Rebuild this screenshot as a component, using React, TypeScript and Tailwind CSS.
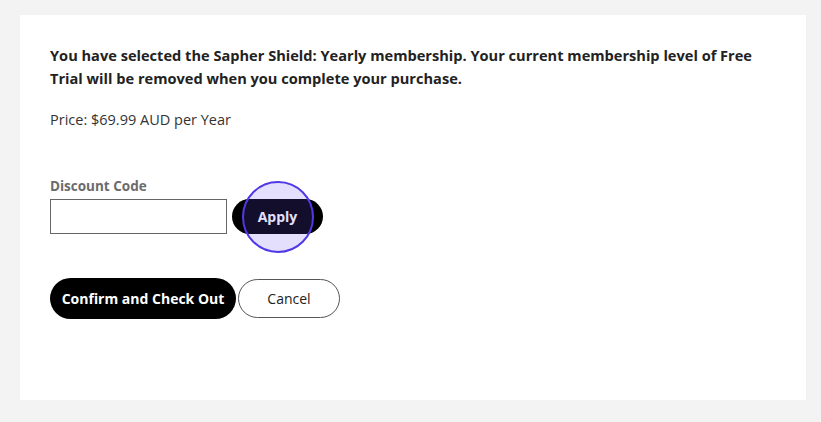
export default function App() {
  return (
    <div className="h-[422px] w-[821px] bg-[#f3f3f3] pl-[20px] pr-[15px] pt-[15px] font-['Open_Sans',sans-serif]">
      <div className="h-[385px] bg-white px-[30px] pt-[29px]">
        <p className="text-[14.6px] font-bold leading-[23px] text-[#222]">
          You have selected the Sapher Shield: Yearly membership. Your current membership level of Free Trial will be
          removed when you complete your purchase.
        </p>
        <p className="mt-[18px] text-[14.5px] leading-[23px] text-[#333]">Price: $69.99 AUD per Year</p>

        <div className="mt-[45px]">
          <label className="block text-[13.5px] font-bold leading-[20px] text-[#6b6b6b]">Discount Code</label>
          <div className="mt-[3px] flex items-center gap-[5px]">
            <input type="text" className="h-[35px] w-[177px] border border-[#666] bg-white px-2 text-[14px] outline-none" />
            <div className="relative">
              <button className="h-[35px] w-[91px] rounded-full bg-black text-[14px] font-bold text-white">Apply</button>
              <span className="pointer-events-none absolute left-1/2 top-1/2 h-[72px] w-[72px] -translate-x-1/2 -translate-y-1/2 rounded-full border-2 border-[#4f38e6] bg-[rgba(106,76,240,0.18)]" />
            </div>
          </div>
        </div>

        <div className="mt-[44px] flex items-center gap-[2px]">
          <button className="h-[41px] w-[186px] rounded-full bg-black text-[14px] font-bold text-white">
            Confirm and Check Out
          </button>
          <button className="h-[39px] w-[102px] rounded-full border border-[#555] bg-white text-[14px] text-[#222]">
            Cancel
          </button>
        </div>
      </div>
    </div>
  );
}
